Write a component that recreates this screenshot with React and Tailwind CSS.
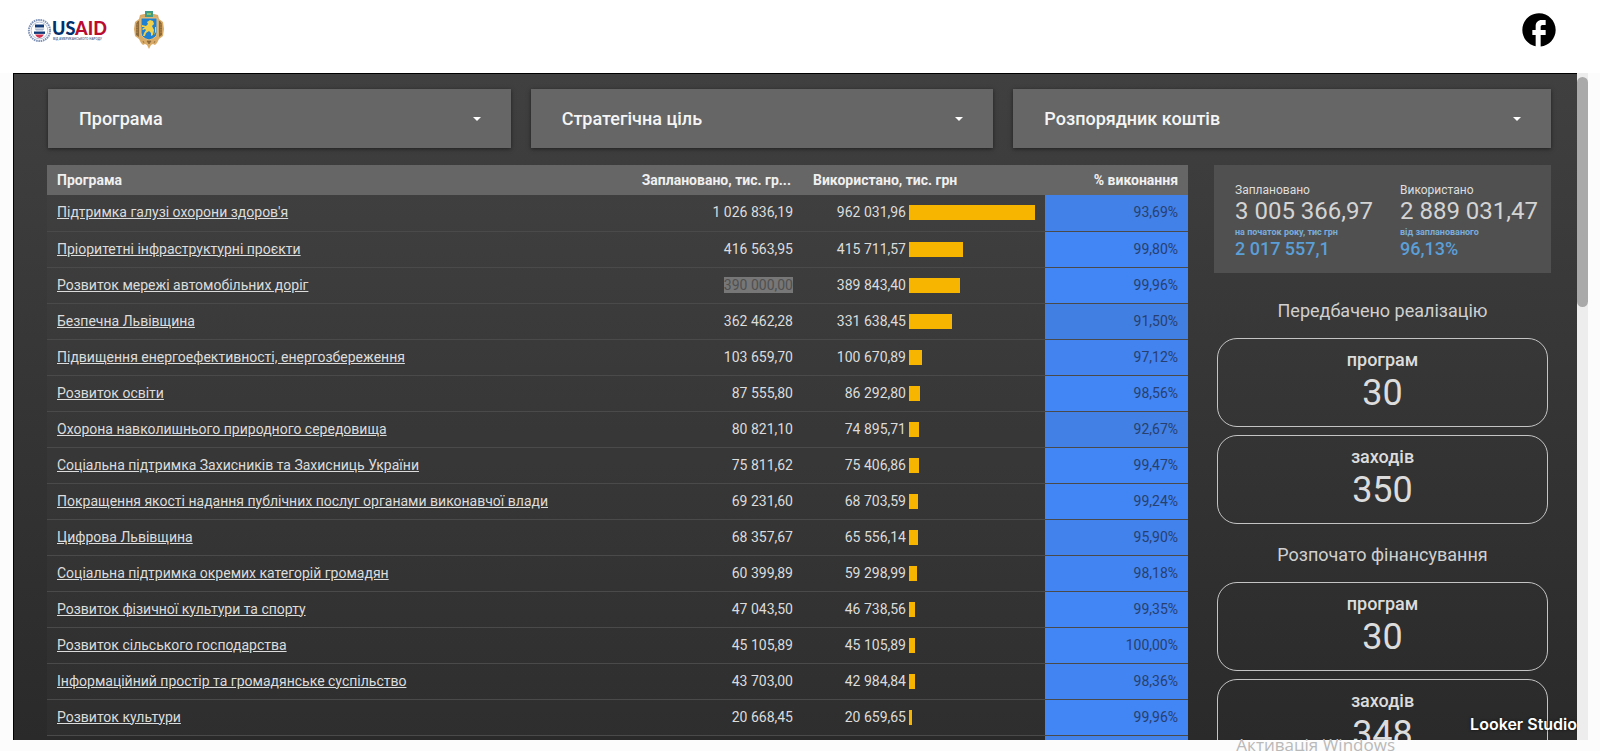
import { MdFacebook } from 'react-icons/md'

const filters = ['Програма', 'Стратегічна ціль', 'Розпорядник коштів']

const rows = [
  { name: "Підтримка галузі охорони здоров'я", planned: '1 026 836,19', used: '962 031,96', percent: '93,69%', tone: 'bg-[#4281e8]' },
  { name: 'Пріоритетні інфраструктурні проєкти', planned: '416 563,95', used: '415 711,57', percent: '99,80%', tone: 'bg-[#4285f4]' },
  { name: 'Розвиток мережі автомобільних доріг', planned: '390 000,00', used: '389 843,40', percent: '99,96%', tone: 'bg-[#4285f4]', selected: true },
  { name: 'Безпечна Львівщина', planned: '362 462,28', used: '331 638,45', percent: '91,50%', tone: 'bg-[#427fe2]' },
  { name: 'Підвищення енергоефективності, енергозбереження', planned: '103 659,70', used: '100 670,89', percent: '97,12%', tone: 'bg-[#4283ef]' },
  { name: 'Розвиток освіти', planned: '87 555,80', used: '86 292,80', percent: '98,56%', tone: 'bg-[#4285f4]' },
  { name: 'Охорона навколишнього природного середовища', planned: '80 821,10', used: '74 895,71', percent: '92,67%', tone: 'bg-[#4280e5]' },
  { name: 'Соціальна підтримка Захисників та Захисниць України', planned: '75 811,62', used: '75 406,86', percent: '99,47%', tone: 'bg-[#4285f4]' },
  { name: 'Покращення якості надання публічних послуг органами виконавчої влади', planned: '69 231,60', used: '68 703,59', percent: '99,24%', tone: 'bg-[#4285f4]' },
  { name: 'Цифрова Львівщина', planned: '68 357,67', used: '65 556,14', percent: '95,90%', tone: 'bg-[#4282ec]' },
  { name: 'Соціальна підтримка окремих категорій громадян', planned: '60 399,89', used: '59 298,99', percent: '98,18%', tone: 'bg-[#4284f2]' },
  { name: 'Розвиток фізичної культури та спорту', planned: '47 043,50', used: '46 738,56', percent: '99,35%', tone: 'bg-[#4285f4]' },
  { name: 'Розвиток сільського господарства', planned: '45 105,89', used: '45 105,89', percent: '100,00%', tone: 'bg-[#4285f4]' },
  { name: 'Інформаційний простір та громадянське суспільство', planned: '43 703,00', used: '42 984,84', percent: '98,36%', tone: 'bg-[#4284f2]' },
  { name: 'Розвиток культури', planned: '20 668,45', used: '20 659,65', percent: '99,96%', tone: 'bg-[#4285f4]' },
]

const toNumber = s => Number(s.replaceAll(' ', '').replace(',', '.'))
const maxUsed = Math.max(...rows.map(r => toNumber(r.used)))

function UsaidLogo() {
  return (
    <svg viewBox="0 0 80 26" className="w-[80px] h-[26px]" role="img" aria-label="USAID">
      <circle cx="12.5" cy="13.5" r="10.6" fill="#fff" stroke="#8295b8" strokeWidth="2" strokeDasharray="1.6 0.7" />
      <circle cx="12.5" cy="13.5" r="8.4" fill="#fff" stroke="#9fb0cb" strokeWidth="0.8" />
      <path d="M8 7.5h9v3H8z" fill="#123a78" />
      <path d="M7.5 11.5h10l-1.5 2h-7z" fill="#a9b8d0" />
      <path d="M7 14.5h11v2.4H7z" fill="#123a78" />
      <path d="M8 17.4h9q-1.5 3-4.500 3.600q-3-.6-4.500-3.600z" fill="#d2324f" />
      <text x="25" y="18" fontFamily="Lato" fontWeight="900" fontSize="18" fill="#002f6c">
        US<tspan fill="#ba0c2f">AID</tspan>
      </text>
      <text x="26" y="23" fontFamily="Liberation Sans" fontWeight="700" fontSize="3" fill="#5c7299">ВІД АМЕРИКАНСЬКОГО НАРОДУ</text>
    </svg>
  )
}

function RegionCrest() {
  return (
    <svg viewBox="0 0 32 40" className="w-[32px] h-[40px]" role="img" aria-label="Львівська область">
      <path d="M7 5l4-1h10l4 1 1 4 4 3 1 7-1 7-4 3-2 4-2 2-2-1-2 1-2 4-2-4-2-1-2 1-2-2-2-4-4-3-1-7 1-7 4-3z" fill="#d9ab68" />
      <path d="M5 11l-2 3v11l3 2V11zM27 11l2 3v11l-3 2V11z" fill="#8d6a3a" />
      <path d="M4 14v10M28 14v10" stroke="#c99a55" strokeWidth="0.8" strokeDasharray="1.500 1" />
      <path d="M12 1h8v6h-8z" fill="#3f9a86" />
      <path d="M14 3h4v2h-4z" fill="#8cc36a" />
      <path d="M8 8h16v15q0 5-8 7-8-2-8-7z" fill="#1f7fd0" stroke="#e6c07a" strokeWidth="1" />
      <path d="M17 10l3 1 1 3-2 2 2 4-1 5-2 1 0-3-2-2-3 2-1 3-2 0 1-3 2-3-1-1-2 1-1-1 3-2-3 0 0-2 4 1 2-2-1-2zM21 25l2-3 0-5-1 0 0 5z" fill="#f2d04a" />
      <path d="M14 31h4l-2 3zM10 31l1 2M22 31l-1 2" fill="#8d6a3a" stroke="#8d6a3a" strokeWidth="0.8" />
    </svg>
  )
}

function Filter({ label }) {
  return (
    <button className="flex h-[59px] items-center justify-between bg-[#666] pl-[31px] pr-6 text-left text-[18px] font-medium text-[#f5f5f5] shadow-[0_1px_4px_rgba(0,0,0,0.5)]">
      {label}
      <svg viewBox="0 0 20 20" className="size-5" aria-hidden="true">
        <path d="M6 8h8l-4 4z" fill="#fff" />
      </svg>
    </button>
  )
}

function ProgramTable() {
  return (
    <table className="w-full table-fixed border-collapse text-[14px] text-[#dcdcdc]">
      <colgroup>
        <col />
        <col className="w-[175px]" />
        <col className="w-[242px]" />
        <col className="w-[143px]" />
      </colgroup>
      <thead>
        <tr className="h-[30px] bg-[#666] font-bold text-[#f0f0f0]">
          <th className="px-[10px] text-left">Програма</th>
          <th className="px-3 text-right whitespace-nowrap">Заплановано, тис. гр...</th>
          <th className="px-[10px] text-left">Використано, тис. грн</th>
          <th className="px-[10px] text-right">% виконання</th>
        </tr>
      </thead>
      <tbody>
        {rows.map(row => (
          <tr key={row.name} className="h-[36px] border-b border-[#4a4a4a] bg-white/[0.02]">
            <td className="truncate px-[10px]">
              <a href="#" className="underline">{row.name}</a>
            </td>
            <td className="px-[10px] text-right">
              <span className={row.selected ? 'bg-[#777] text-[#505050]' : ''}>{row.planned}</span>
            </td>
            <td className="px-[10px]">
              <div className="flex items-center gap-[3px]">
                <span className="w-[93px] shrink-0 text-right">{row.used}</span>
                <div className="flex-1">
                  <div className="h-[15px] bg-[#f7b500]" style={{ width: `${(toNumber(row.used) / maxUsed) * 100}%` }} />
                </div>
              </div>
            </td>
            <td className={`px-[10px] text-right text-[#28406e] ${row.tone}`}>{row.percent}</td>
          </tr>
        ))}
        <tr className="h-[36px]">
          <td colSpan={3} />
          <td className="bg-[#4281e8]" />
        </tr>
      </tbody>
    </table>
  )
}

function Score({ label, value, note, noteValue }) {
  return (
    <div>
      <p className="text-[12px] leading-[14px] text-[#dedede]">{label}</p>
      <p className="text-[24px] leading-[28px] text-[#d4d4d4]">{value}</p>
      <p className="text-[9px] leading-[14px] font-bold text-[#79addb]">{note}</p>
      <p className="text-[18px] leading-[20px] font-medium text-[#5b9fd8]">{noteValue}</p>
    </div>
  )
}

function Counter({ label, value }) {
  return (
    <div className="mx-[3px] flex h-[89px] flex-col items-center rounded-[20px] border border-[#c4c4c4] pt-[10px] text-[#dcdcdc]">
      <p className="text-[18px] leading-[22px] font-medium">{label}</p>
      <p className="text-[36px] leading-[44px]">{value}</p>
    </div>
  )
}

function CounterGroup({ title, counters }) {
  return (
    <section className="flex flex-col gap-2">
      <h2 className="mb-2 text-center text-[18px] leading-[22px] text-[#d0d0d0]">{title}</h2>
      {counters.map(c => (
        <Counter key={c.label} label={c.label} value={c.value} />
      ))}
    </section>
  )
}

export default function App() {
  return (
    <div className="relative flex h-screen flex-col overflow-hidden bg-[#fcfcfc] font-['Roboto',sans-serif]">
      <header className="flex h-[73px] shrink-0 items-start justify-between bg-white pl-[27px] pr-[41px]">
        <div className="flex items-center gap-[26px] pt-[10px]">
          <a href="#"><UsaidLogo /></a>
          <a href="#"><RegionCrest /></a>
        </div>
        <a href="#" aria-label="Facebook" className="pt-[10px]">
          <MdFacebook className="size-10 text-black" />
        </a>
      </header>

      <div className="mb-[11px] ml-[13px] mr-3 flex min-h-0 flex-1">
        <main className="relative flex-1 overflow-hidden border-l border-t border-black bg-linear-to-b from-[#404040] to-[#2a2a2a] pl-[33px] pr-[26px] pt-[15px]">
          <div className="grid grid-cols-[463fr_463fr_538fr] gap-5 pl-px">
            {filters.map(label => (
              <Filter key={label} label={label} />
            ))}
          </div>

          <div className="mt-[17px] flex items-start gap-[26px]">
            <div className="min-w-0 flex-1">
              <ProgramTable />
            </div>
            <aside className="w-[337px] shrink-0">
              <div className="grid h-[108px] grid-cols-[165px_1fr] bg-[#505050] pl-[21px] pt-[18px]">
                <Score label="Заплановано" value="3 005 366,97" note="на початок року, тис грн" noteValue="2 017 557,1" />
                <Score label="Використано" value="2 889 031,47" note="від запланованого" noteValue="96,13%" />
              </div>
              <div className="mt-[27px] flex flex-col gap-5">
                <CounterGroup
                  title="Передбачено реалізацію"
                  counters={[{ label: 'програм', value: 30 }, { label: 'заходів', value: 350 }]}
                />
                <CounterGroup
                  title="Розпочато фінансування"
                  counters={[{ label: 'програм', value: 30 }, { label: 'заходів', value: 348 }]}
                />
              </div>
            </aside>
          </div>

          <a
            href="#"
            className="absolute bottom-1 right-0 font-['Inter',sans-serif] text-[16px] leading-6 font-semibold text-white [text-shadow:0_0_3px_rgba(0,0,0,0.7)]"
          >
            Looker Studio
          </a>
        </main>
        <div className="w-[11px] bg-[#ededed] pt-1">
          <div className="h-[230px] rounded-full bg-[#a9a9a9]" />
        </div>
      </div>

      <p className="absolute -bottom-2 right-[205px] font-['Open_Sans',sans-serif] text-[17px] leading-7 text-[#b9b9b9]">
        Активація Windows
      </p>
    </div>
  )
}
